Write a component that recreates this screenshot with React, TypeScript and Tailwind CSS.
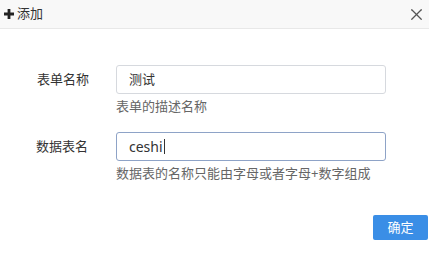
import { X } from 'lucide-react';

const font = { fontFamily: '"Noto Sans", "Noto Sans CJK SC", sans-serif' };

export default function App() {
  return (
    <div className="w-[429px] h-[253px] bg-white text-[#333] overflow-hidden" style={font}>
      {/* Header */}
      <div className="h-[29px] bg-[#f8f8f8] border-b border-[#e8e8e8] flex items-center justify-between pl-[4px] pr-[3px]">
        <div className="flex items-center gap-[2px] text-[13px] text-[#333]">
          <svg width="10" height="10" viewBox="0 0 10 10" className="mr-[1px]">
            <path d="M3.6 0h2.8v3.6H10v2.8H6.4V10H3.6V6.4H0V3.6h3.6z" fill="#222" />
          </svg>
          <span>添加</span>
        </div>
        <X className="w-[19px] h-[19px] text-[#555]" strokeWidth={1.6} />
      </div>

      {/* Form */}
      <div className="pt-[36px]">
        <div className="flex items-start">
          <div className="w-[116px] h-[29px] flex items-center justify-end pr-[27px] text-[13px] text-[#333]">
            表单名称
          </div>
          <div>
            <div className="w-[270px] h-[29px] border border-[#d6d9de] rounded-[3px] flex items-center px-[12px] text-[13px] text-[#333]">
              测试
            </div>
            <div className="mt-[2px] text-[13px] leading-[20px] text-[#666]">表单的描述名称</div>
          </div>
        </div>

        <div className="flex items-start mt-[16px]">
          <div className="w-[116px] h-[29px] flex items-center justify-end pr-[28px] text-[13px] text-[#333]">
            数据表名
          </div>
          <div>
            <div className="w-[270px] h-[29px] border border-[#8ea3c7] rounded-[3px] flex items-center px-[12px] text-[14px] text-[#333]">
              ceshi<span className="w-px h-[15px] bg-[#333] ml-[1px]" />
            </div>
            <div className="mt-[2px] text-[13px] leading-[20px] text-[#666]">
              数据表的名称只能由字母或者字母+数字组成
            </div>
          </div>
        </div>
      </div>

      {/* Footer */}
      <div className="flex justify-end pr-px mt-[32px]">
        <button className="w-[55px] h-[25px] bg-[#3a8ee6] text-white text-[13px] rounded-[2px] flex items-center justify-center">
          确定
        </button>
      </div>
    </div>
  );
}
